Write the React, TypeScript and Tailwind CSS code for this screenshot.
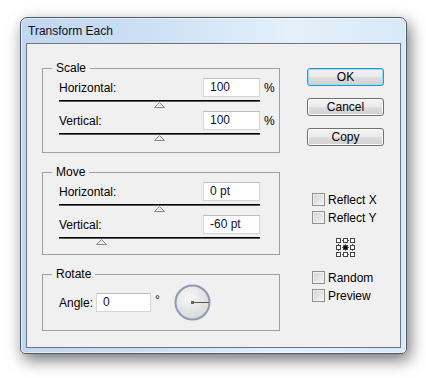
import React from 'react';

const font = "font-['Liberation_Sans',Arial,sans-serif]";

function Group({ title, className, children }: { title: string; className?: string; children: React.ReactNode }) {
  return (
    <div className={`relative border border-[#a0a0a0] ${className ?? ''}`}>
      {/* legend sits on top of the frame line */}
      <span className="absolute left-[9px] top-[-8px] bg-[#f0f0f0] px-[4px] leading-[14px]">{title}</span>
      {children}
    </div>
  );
}

function Field({ value, w }: { value: string; w: string }) {
  return (
    <div
      className={`${w} h-[19px] border border-[#d6d6d6] border-t-[#bdbdbd] bg-white pl-[6px] leading-[17px] text-[#10103c]`}
    >
      {value}
    </div>
  );
}

function Row({ label, value, unit }: { label: string; value: string; unit?: string }) {
  return (
    <div className="flex h-[19px] items-center">
      <span className="w-[144px]">{label}</span>
      <Field value={value} w="w-[57px]" />
      {unit && <span className="ml-[4px]">{unit}</span>}
    </div>
  );
}

function Slider({ pos }: { pos: number }) {
  return (
    <div className="h-[14px] w-[201px] pt-[3px]">
      <div className="h-[1px] bg-black" />
      <div className="h-[1px] bg-[#5c5c5c]" />
      <svg className="block" style={{ marginLeft: pos }} width="11" height="6" viewBox="0 0 11 6">
        <polygon points="0.5,5.5 5.5,0.5 10.5,5.5" fill="#ececec" stroke="#8a8a8a" />
      </svg>
    </div>
  );
}

function Button({ label, active }: { label: string; active?: boolean }) {
  return (
    <div
      className={`flex h-[18px] w-[77px] items-center justify-center rounded-[3px] border bg-[linear-gradient(180deg,#f3f3f3_0%,#ebebeb_48%,#dddddd_52%,#d0d0d0_100%)] ${
        active ? 'border-[#3c8fc4] shadow-[inset_0_0_0_1px_#8ce2f8]' : 'border-[#707070] shadow-[inset_0_0_0_1px_#fbfbfb]'
      }`}
    >
      {label}
    </div>
  );
}

function Check({ label, className }: { label: string; className?: string }) {
  return (
    <div className={`flex h-[13px] items-center pl-[5px] ${className ?? ''}`}>
      <div className="h-[13px] w-[13px] border border-[#8f8f8f] bg-[linear-gradient(135deg,#d2d2d2,#f4f4f4)] shadow-[inset_0_0_0_1px_#f2f2f2]" />
      <span className="ml-[3px]">{label}</span>
    </div>
  );
}

function Locator() {
  const p = [1.5, 8.5, 15.5];
  return (
    <svg width="21" height="21" viewBox="0 0 21 21" className="block">
      <g stroke="#5a5a5a" strokeDasharray="1 1" strokeWidth="1">
        {p.map((y) => (
          <line key={'h' + y} x1="1" y1={y + 2} x2="19" y2={y + 2} />
        ))}
        {p.map((x) => (
          <line key={'v' + x} x1={x + 2} y1="1" x2={x + 2} y2="19" />
        ))}
      </g>
      {p.map((y) =>
        p.map((x) => (
          <rect
            key={x + '-' + y}
            x={x}
            y={y}
            width="4"
            height="4"
            fill={x === 8.5 && y === 8.5 ? '#000' : '#fff'}
            stroke="#444"
            strokeWidth="1"
          />
        ))
      )}
    </svg>
  );
}

function Dial() {
  return (
    <svg width="37" height="37" viewBox="0 0 37 37" className="block">
      <defs>
        <radialGradient id="dg" cx="40%" cy="35%" r="70%">
          <stop offset="0" stopColor="#f8f8f8" />
          <stop offset="1" stopColor="#d6d6d6" />
        </radialGradient>
      </defs>
      <circle cx="18.5" cy="18.5" r="17" fill="url(#dg)" stroke="#8e9ab3" strokeWidth="2" />
      <line x1="18.5" y1="18.5" x2="35" y2="18.5" stroke="#555" strokeWidth="1" />
      <rect x="17" y="17" width="3" height="3" fill="#666" />
    </svg>
  );
}

export default function App() {
  return (
    <div className={`h-[378px] w-[426px] bg-white pl-[20px] pt-[17px] text-[12px] text-black ${font}`}>
      <div className="flex h-[337px] w-[387px] flex-col rounded-t-[7px] rounded-b-[5px] border border-[#4e5b6b] bg-[linear-gradient(90deg,#c1d7ef_0%,#cde0f4_35%,#e4f0fb_70%,#d9e8f7_100%)] shadow-[3px_6px_16px_rgba(0,0,0,0.55),inset_0_0_0_1px_rgba(255,255,255,0.55)]">
        {/* Title bar */}
        <div className="flex h-[25px] items-center pl-[7px] text-[12px] text-[#0c0c20]">Transform Each</div>

        {/* Client area */}
        <div className="mx-[5px] mb-[5px] flex flex-1 border border-[#6b7788] bg-[#f0f0f0] pl-[15px] pt-[24px]">
          {/* Left column */}
          <div className="flex w-[238px] flex-col gap-[19px]">
            <Group title="Scale" className="pb-[8px] pl-[16px] pt-[9px]">
              <Row label="Horizontal:" value="100" unit="%" />
              <Slider pos={95} />
              <Row label="Vertical:" value="100" unit="%" />
              <Slider pos={95} />
            </Group>

            <Group title="Move" className="pb-[6px] pl-[16px] pt-[9px]">
              <Row label="Horizontal:" value="0 pt" />
              <Slider pos={95} />
              <Row label="Vertical:" value="-60 pt" />
              <Slider pos={37} />
            </Group>

            <Group title="Rotate" className="flex h-[57px] items-center pl-[16px]">
              <span className="w-[37px]">Angle:</span>
              <Field value="0" w="w-[55px]" />
              <span className="w-[23px] self-start pl-[4px] pt-[16px]">°</span>
              <Dial />
            </Group>
          </div>

          {/* Right column */}
          <div className="ml-[27px] flex w-[77px] flex-col">
            <Button label="OK" active />
            <div className="mt-[12px]">
              <Button label="Cancel" />
            </div>
            <div className="mt-[12px]">
              <Button label="Copy" />
            </div>
            <Check label="Reflect X" className="mt-[47px]" />
            <Check label="Reflect Y" className="mt-[5px]" />
            <div className="mt-[13px] pl-[28px]">
              <Locator />
            </div>
            <Check label="Random" className="mt-[13px]" />
            <Check label="Preview" className="mt-[5px]" />
          </div>
        </div>
      </div>
    </div>
  );
}
